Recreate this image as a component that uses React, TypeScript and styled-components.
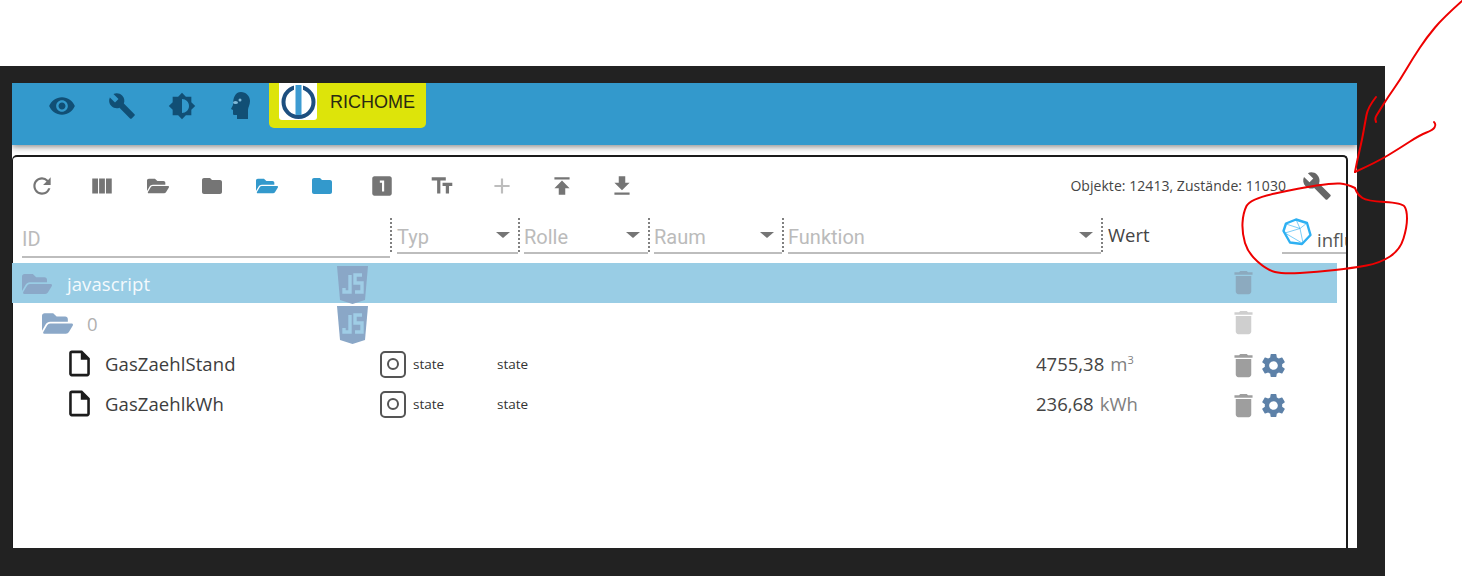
import React from 'react';
import styled, { createGlobalStyle } from 'styled-components';
import {
  MdAdd,
  MdBuild,
  MdBrightness6,
  MdDelete,
  MdFileDownload,
  MdFolder,
  MdLooksOne,
  MdOutlineInsertDriveFile,
  MdPublish,
  MdRefresh,
  MdSettings,
  MdTextFields,
  MdViewColumn,
  MdVisibility,
} from 'react-icons/md';
import { FaFolderOpen } from 'react-icons/fa';

const GlobalStyle = createGlobalStyle`
  html, body {
    margin: 0;
    padding: 0;
    background: #fff;
    overflow: hidden;
  }
  body {
    font-family: "Open Sans", "Liberation Sans", sans-serif;
  }
`;

const Page = styled.div`
  position: relative;
  width: 1462px;
  height: 576px;
  padding-top: 66px;
  box-sizing: border-box;
`;

const Frame = styled.div`
  width: 1385px;
  height: 510px;
  box-sizing: border-box;
  padding: 17px 28px 28px 12px;
  background: #222;
`;

const Screen = styled.div`
  display: flex;
  flex-direction: column;
  height: 465px;
  background: #fff;
  overflow: hidden;
`;

const Header = styled.header`
  display: flex;
  align-items: flex-start;
  gap: 32px;
  flex: 0 0 62px;
  padding-left: 36px;
  background: #3399cc;
  box-shadow: 0 2px 6px rgba(0, 0, 0, 0.45);
  position: relative;
`;

const HeaderIcon = styled.div`
  display: flex;
  align-items: center;
  justify-content: center;
  width: 28px;
  height: 46px;
  color: #114f75;
`;

const InstanceBadge = styled.div`
  display: flex;
  align-items: flex-start;
  gap: 13px;
  width: 157px;
  height: 45px;
  margin-left: -19px;
  padding-left: 10px;
  box-sizing: border-box;
  background: #dde40a;
  border-radius: 0 0 5px 5px;
`;

const LogoBox = styled.div`
  display: flex;
  width: 38px;
  height: 37px;
  background: #fff;
  border-radius: 0 0 3px 3px;
`;

const BadgeLabel = styled.span`
  margin-top: 8px;
  font-family: "Liberation Sans", Arial, sans-serif;
  font-size: 18px;
  line-height: 22px;
  color: #2a2a12;
`;

const Card = styled.section`
  flex: 1;
  margin-top: 10px;
  border-top: 2px solid #1a1a1a;
  border-left: 1px solid #1a1a1a;
  border-right: 2px solid #1a1a1a;
  border-radius: 5px 5px 0 0;
  margin-right: 9px;
  background: #fff;
  position: relative;
`;

const Toolbar = styled.div`
  display: flex;
  align-items: center;
  box-sizing: border-box;
  height: 60px;
  padding: 0 15px 2px 16px;
`;

const ToolButton = styled.div<{ $gap: number; $color?: string }>`
  display: flex;
  align-items: center;
  justify-content: center;
  width: 26px;
  height: 30px;
  margin-left: ${({ $gap }) => $gap}px;
  color: ${({ $color = '#757575' }) => $color};
`;

const Counter = styled.span`
  margin-left: auto;
  font-size: 14px;
  line-height: 18px;
  letter-spacing: 0.05px;
  color: #444;
`;

const SettingsButton = styled.div`
  display: flex;
  margin-left: 16px;
  margin-right: -1px;
  color: #666;
`;

const FilterRow = styled.div`
  display: grid;
  grid-template-columns: 369px 128px 130px 134px 319px 180px 64px;
  height: 46px;
  padding-left: 9px;
`;

const FilterCell = styled.div<{ $inset?: number; $lineY?: number }>`
  position: relative;
  display: flex;
  align-items: center;
  box-sizing: border-box;
  height: ${({ $lineY = 37 }) => $lineY}px;
  margin-left: ${({ $inset = 5 }) => $inset}px;
  margin-right: 1px;
  border-bottom: 2px solid #bdbdbd;
`;

const FilterLabel = styled.span`
  padding-top: 4px;
  font-family: Roboto, "Liberation Sans", sans-serif;
  font-size: 20px;
  color: #bbb;
`;

const Caret = styled.span`
  margin-left: auto;
  margin-right: 8px;
  border-left: 7px solid transparent;
  border-right: 7px solid transparent;
  border-top: 6px solid #757575;
`;

const Divider = styled.span`
  position: absolute;
  top: 1px;
  right: -2px;
  width: 2px;
  height: 36px;
  background: repeating-linear-gradient(to bottom, #808080 0 2px, transparent 2px 4px);
`;

const ValueHead = styled.span`
  padding: 3px 0 0 6px;
  font-size: 18.5px;
  line-height: 30px;
  color: #444;
`;

const AdapterHead = styled.div`
  display: flex;
  align-items: flex-end;
  gap: 5px;
  box-sizing: border-box;
  height: 37px;
  border-bottom: 2px solid #bdbdbd;
  overflow: hidden;
  white-space: nowrap;
  font-size: 18.5px;
  color: #555;
`;

const AdapterBadge = styled.span`
  display: flex;
  align-self: flex-start;
  margin-top: 1px;
`;

const TreeRow = styled.div<{ $selected?: boolean }>`
  display: grid;
  grid-template-columns: 325px 43px 117px 539px 191.5px 31px 29px;
  align-items: center;
  width: 1325px;
  height: 40px;
  margin-left: -1px;
  background: ${({ $selected }) => ($selected ? '#99cde5' : 'transparent')};
`;

const NameCell = styled.div<{ $indent: number; $gap: number }>`
  display: flex;
  align-items: center;
  gap: ${({ $gap }) => $gap}px;
  padding-left: ${({ $indent }) => $indent}px;
`;

const FolderIcon = styled.span`
  display: flex;
  color: #8ba8c8;
`;

const FileIcon = styled.span`
  display: flex;
  color: #1c1c1c;
`;

const NodeName = styled.span<{ $tone: 'light' | 'muted' | 'dark' }>`
  margin-top: ${({ $tone }) => ($tone === 'dark' ? 2 : 0)}px;
  font-size: 18.5px;
  line-height: 24px;
  letter-spacing: 0.08px;
  color: ${({ $tone }) =>
    $tone === 'light' ? '#f4fafd' : $tone === 'muted' ? '#b0b0b0' : '#3d3d3d'};
`;

const ShieldCell = styled.div`
  display: flex;
  margin-top: 3px;
`;

const SmallText = styled.span`
  margin-top: 2px;
  font-size: 13.5px;
  color: #333;
`;

const TypeCell = styled.div`
  display: flex;
  align-items: center;
  gap: 7px;
  margin-top: 2px;
  ${SmallText} {
    margin-top: 0;
  }
`;

const StateBadge = styled.span`
  display: flex;
  align-items: center;
  justify-content: center;
  box-sizing: border-box;
  width: 26px;
  height: 27px;
  border: 2px solid #555;
  border-radius: 5px;
  &::after {
    content: '';
    box-sizing: border-box;
    width: 12px;
    height: 12px;
    border: 2px solid #555;
    border-radius: 50%;
  }
`;

const Value = styled.div`
  margin-top: 2px;
  font-size: 18.5px;
  line-height: 24px;
  color: #444;
  white-space: nowrap;
`;

const Unit = styled.span`
  margin-left: 6px;
  color: #808080;
  sup {
    font-size: 11px;
    line-height: 0;
  }
`;

const ActionIcon = styled.div<{ $color: string; $top?: number }>`
  display: flex;
  margin-top: ${({ $top = 5 }) => $top}px;
  color: ${({ $color }) => $color};
`;

const Annotation = styled.svg`
  position: absolute;
  top: 0;
  left: 0;
  pointer-events: none;
`;

// glattet die handgezeichneten Linien
const smooth = (pts: number[][]) => {
  let d = `M${pts[0][0]} ${pts[0][1]}`;
  for (let i = 1; i < pts.length - 1; i++) {
    const mx = (pts[i][0] + pts[i + 1][0]) / 2;
    const my = (pts[i][1] + pts[i + 1][1]) / 2;
    d += ` Q${pts[i][0]} ${pts[i][1]} ${mx} ${my}`;
  }
  const last = pts[pts.length - 1];
  return `${d} L${last[0]} ${last[1]}`;
};

const strokes = [
  [[1462, 1], [1443, 18], [1427, 37], [1413, 58], [1400, 80], [1388, 97], [1378, 113], [1375, 118], [1376, 122]],
  [[1376, 97], [1368, 107], [1365, 123], [1362, 140], [1358, 157], [1355, 172]],
  [[1355, 172], [1377, 162], [1400, 148], [1420, 135], [1433, 130], [1436, 125], [1434, 122]],
  [[1355, 188], [1347, 184], [1333, 183], [1300, 188], [1250, 199], [1243, 213], [1242, 233], [1248, 253], [1267, 270], [1283, 274], [1317, 272], [1353, 268], [1380, 263], [1400, 250], [1407, 227], [1407, 210], [1402, 203], [1367, 201], [1358, 195], [1355, 188]],
];

const HeadIcon = () => (
  <svg width="24" height="28" viewBox="-1 0 24 28">
    <path
      d="M10 0C15 0 19 4 19 9C19 13 17 15 17 18L17 27L6 27L6 23L3 23C2 23 2 22 2 21L2 18L0 17L2 13C2 6 4 0 10 0Z"
      fill="currentColor"
    />
    <ellipse cx="4.5" cy="10.5" rx="2.5" ry="1.6" fill="#7fb9d8" />
    <circle cx="9" cy="8" r="1.5" fill="#7fb9d8" />
  </svg>
);

const IobLogo = () => (
  <svg width="38" height="37" viewBox="0 0 38 37">
    <circle cx="19.5" cy="19" r="15" fill="none" stroke="#1d4f80" strokeWidth="4" />
    <rect x="15" y="0" width="9" height="8" fill="#fff" />
    <rect x="16.5" y="2" width="6" height="30" fill="#3d9bd2" />
  </svg>
);

const AdapterIcon = () => (
  <svg width="30" height="28" viewBox="0 0 30 28" fill="none" stroke="#2eb0f2">
    <path d="M14 1.5L25 5L28.5 17L20 26L8 24.5L1.5 13L4 5.5Z" strokeWidth="2.4" strokeLinejoin="round" />
    <path d="M4 6L18 10.5L14 1.5M18 10.5L25 5M18 10.5L21 25M18 10.5L3 15L20 25" strokeWidth="0.9" opacity="0.7" />
  </svg>
);

const JsShield = () => (
  <svg width="31" height="38" viewBox="0 0 31 38">
    <path d="M0 0H31L28 34L15.5 38L3 34Z" fill="#8aa7c7" />
    <path d="M13 9V26H7V22M25 9H18V17H25V26H18" fill="none" stroke="#9fcde6" strokeWidth="3.4" />
  </svg>
);

const toolItems = [
  { icon: <MdRefresh size={30} />, gap: 0 },
  { icon: <MdViewColumn size={34} />, gap: 34 },
  { icon: <FaFolderOpen size={22} />, gap: 30 },
  { icon: <MdFolder size={24} />, gap: 28 },
  { icon: <FaFolderOpen size={22} />, gap: 29, color: '#3399cc' },
  { icon: <MdFolder size={24} />, gap: 29, color: '#3399cc' },
  { icon: <MdLooksOne size={30} />, gap: 34 },
  { icon: <MdTextFields size={32} />, gap: 34 },
  { icon: <MdAdd size={26} />, gap: 34, color: '#bdbdbd' },
  { icon: <MdPublish size={32} />, gap: 34 },
  { icon: <MdFileDownload size={32} />, gap: 34 },
];

const filters = [
  { label: 'ID', inset: 0, lineY: 41 },
  { label: 'Typ', inset: 6, caret: true },
  { label: 'Rolle', caret: true },
  { label: 'Raum', caret: true },
  { label: 'Funktion', caret: true },
];

export default function App() {
  return (
    <Page>
      <GlobalStyle />
      <Frame>
        <Screen>
          <Header>
            <HeaderIcon><MdVisibility size={32} /></HeaderIcon>
            <HeaderIcon><MdBuild size={30} /></HeaderIcon>
            <HeaderIcon><MdBrightness6 size={32} /></HeaderIcon>
            <HeaderIcon><HeadIcon /></HeaderIcon>
            <InstanceBadge>
              <LogoBox><IobLogo /></LogoBox>
              <BadgeLabel>RICHOME</BadgeLabel>
            </InstanceBadge>
          </Header>
          <Card>
            <Toolbar>
              {toolItems.map((item, i) => (
                <ToolButton key={i} $gap={item.gap} $color={item.color}>{item.icon}</ToolButton>
              ))}
              <Counter>Objekte: 12413, Zustände: 11030</Counter>
              <SettingsButton><MdBuild size={30} /></SettingsButton>
            </Toolbar>
            <FilterRow>
              {filters.map((f) => (
                <FilterCell key={f.label} $inset={f.inset} $lineY={f.lineY}>
                  <FilterLabel>{f.label}</FilterLabel>
                  {f.caret && <Caret />}
                  <Divider />
                </FilterCell>
              ))}
              <ValueHead>Wert</ValueHead>
              <AdapterHead>
                <AdapterBadge><AdapterIcon /></AdapterBadge>
                <span>influxdb</span>
              </AdapterHead>
            </FilterRow>

            <TreeRow $selected>
              <NameCell $indent={10} $gap={15}>
                <FolderIcon><FaFolderOpen size={30} /></FolderIcon>
                <NodeName $tone="light">javascript</NodeName>
              </NameCell>
              <ShieldCell><JsShield /></ShieldCell>
              <span />
              <span />
              <span />
              <ActionIcon $color="#8caabf" $top={-3}><MdDelete size={31} /></ActionIcon>
            </TreeRow>
            <TreeRow>
              <NameCell $indent={30} $gap={14}>
                <FolderIcon><FaFolderOpen size={31} /></FolderIcon>
                <NodeName $tone="muted">0</NodeName>
              </NameCell>
              <ShieldCell><JsShield /></ShieldCell>
              <span />
              <span />
              <span />
              <ActionIcon $color="#cfcfcf" $top={-2}><MdDelete size={31} /></ActionIcon>
            </TreeRow>
            <TreeRow>
              <NameCell $indent={52} $gap={10}>
                <FileIcon><MdOutlineInsertDriveFile size={31} /></FileIcon>
                <NodeName $tone="dark">GasZaehlStand</NodeName>
              </NameCell>
              <span />
              <TypeCell><StateBadge /><SmallText>state</SmallText></TypeCell>
              <SmallText>state</SmallText>
              <Value>4755,38<Unit>m<sup>3</sup></Unit></Value>
              <ActionIcon $color="#9e9e9e"><MdDelete size={31} /></ActionIcon>
              <ActionIcon $color="#5d81a8"><MdSettings size={29} /></ActionIcon>
            </TreeRow>
            <TreeRow>
              <NameCell $indent={52} $gap={10}>
                <FileIcon><MdOutlineInsertDriveFile size={31} /></FileIcon>
                <NodeName $tone="dark">GasZaehlkWh</NodeName>
              </NameCell>
              <span />
              <TypeCell><StateBadge /><SmallText>state</SmallText></TypeCell>
              <SmallText>state</SmallText>
              <Value>236,68<Unit>kWh</Unit></Value>
              <ActionIcon $color="#9e9e9e"><MdDelete size={31} /></ActionIcon>
              <ActionIcon $color="#5d81a8"><MdSettings size={29} /></ActionIcon>
            </TreeRow>
          </Card>
        </Screen>
      </Frame>
      <Annotation width="1462" height="576" fill="none" stroke="#ee0000" strokeWidth="2" strokeLinecap="round">
        {strokes.map((pts, i) => (
          <path key={i} d={smooth(pts)} />
        ))}
      </Annotation>
    </Page>
  );
}
